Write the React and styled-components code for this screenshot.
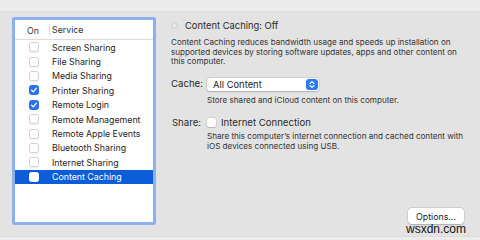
import React from 'react';
import styled, { createGlobalStyle } from 'styled-components';

const GlobalStyle = createGlobalStyle`
  html, body {
    margin: 0;
    padding: 0;
    background: #e3e3e3;
  }
  body {
    font-family: Inter, "Liberation Sans", sans-serif;
    color: #262626;
    -webkit-font-smoothing: antialiased;
  }
`

const Window = styled.section`
  position: relative;
  width: 480px;
  height: 240px;
  display: flex;
  flex-direction: column;
  overflow: hidden;
  background: #e3e3e3;
`

const TopStrip = styled.div`
  height: 12px;
  background: #ececec;
  border-bottom: 1px solid #dedede;
  box-sizing: border-box;
`

const BottomStrip = styled.div`
  height: 4px;
  background: #ececec;
  border-top: 1px solid #dcdcdc;
  box-sizing: border-box;
`

const Main = styled.div`
  flex: 1;
  display: flex;
  min-height: 0;
`

const ListBox = styled.div`
  margin: 5px 0 0 12px;
  width: 144px;
  height: 208px;
  box-sizing: border-box;
  border: 3px solid #8db1ee;
  border-radius: 2px;
  background: #fff;
  display: flex;
  flex-direction: column;
`

const Header = styled.div`
  height: 19px;
  display: flex;
  align-items: center;
  border-bottom: 1px solid #dcdcdc;
  font-size: 8.8px;
  color: #333;
`

const HeadOn = styled.div`
  width: 35px;
  box-sizing: border-box;
  padding-left: 12px;
  align-self: stretch;
  display: flex;
  align-items: center;
  border-right: 1px solid #dedede;
  margin: 4px 0 3px;
`

const HeadService = styled.div`
  padding-left: 2px;
`

const Row = styled.div`
  height: 14.4px;
  display: flex;
  align-items: center;
  font-size: 8.8px;
  background: ${p => (p.$selected ? '#0b5ed8' : 'transparent')};
  color: ${p => (p.$selected ? '#fff' : '#262626')};
`

const CheckCell = styled.div`
  width: 35px;
  display: flex;
  align-items: center;
  padding-left: 14px;
  box-sizing: border-box;
`

const Label = styled.div`
  padding-left: 2px;
  white-space: nowrap;
`

const Check = styled.span`
  width: 10px;
  height: 10px;
  box-sizing: border-box;
  border-radius: 2.5px;
  display: inline-flex;
  align-items: center;
  justify-content: center;
  background: ${p => (p.$on ? '#2a72ec' : '#fff')};
  border: 1px solid ${p => (p.$on ? '#2a72ec' : p.$bright ? '#fff' : '#d2d2d2')};
  box-shadow: ${p => (p.$on ? 'none' : '0 0.5px 1px rgba(0,0,0,0.06)')};
`

const Panel = styled.div`
  flex: 1;
  display: flex;
  flex-direction: column;
  padding: 7px 16px 12px 15px;
  min-width: 0;
`

const TitleRow = styled.div`
  display: flex;
  align-items: center;
  height: 12px;
  gap: 7px;
  font-size: 9.4px;
  color: #2a2a2a;
`

const Radio = styled.span`
  width: 7px;
  height: 7px;
  border-radius: 50%;
  border: 1px solid #cdcdcd;
  background: #e6e6e6;
  box-sizing: border-box;
`

const Desc = styled.p`
  margin: ${p => p.$mt || '0'} 0 0 ${p => p.$indent || '0'};
  font-size: 8.1px;
  line-height: ${p => p.$lh || '9.5px'};
  color: #333;
  white-space: nowrap;
`

const FormGrid = styled.div`
  margin-top: ${p => p.$mt || '11px'};
  display: grid;
  grid-template-columns: 30px auto;
  column-gap: 6px;
  align-items: center;
`

const FieldLabel = styled.div`
  text-align: right;
  font-size: 9.6px;
  color: #2a2a2a;
  line-height: 12px;
`

const Popup = styled.div`
  width: 112px;
  height: 13px;
  box-sizing: border-box;
  background: #fff;
  border-radius: 3px;
  box-shadow: 0 0 0 0.5px rgba(0,0,0,0.12), 0 0.5px 1.5px rgba(0,0,0,0.18);
  display: flex;
  align-items: center;
  justify-content: space-between;
  padding: 0 1px 0 6px;
  font-size: 9.4px;
  color: #222;
`

const Stepper = styled.span`
  width: 12px;
  height: 11px;
  border-radius: 3px;
  background: #2c7bf0;
  display: flex;
  align-items: center;
  justify-content: center;
`

const ShareCheck = styled.span`
  width: 9px;
  height: 9px;
  box-sizing: border-box;
  border-radius: 2px;
  background: #fff;
  box-shadow: 0 0 0 0.5px rgba(0,0,0,0.12), 0 0.5px 1px rgba(0,0,0,0.15);
`

const ShareLine = styled.div`
  display: flex;
  align-items: center;
  gap: 5px;
  font-size: 9.6px;
  line-height: 12px;
  color: #2a2a2a;
`

const Footer = styled.div`
  margin-top: auto;
  display: flex;
  justify-content: flex-end;
`

const Button = styled.button`
  width: 56px;
  height: 16px;
  border: none;
  border-radius: 4px;
  background: #fff;
  box-shadow: 0 0 0 0.5px rgba(0,0,0,0.12), 0 0.5px 1.5px rgba(0,0,0,0.2);
  font-family: inherit;
  font-size: 8.8px;
  color: #222;
  padding: 0;
`

const Watermark = styled.div`
  position: absolute;
  left: 406px;
  top: 222px;
  font-family: "Liberation Sans", Arial, sans-serif;
  font-size: 12px;
  line-height: 14px;
  color: #111;
`

const services = [
  { name: 'Screen Sharing', on: false },
  { name: 'File Sharing', on: false },
  { name: 'Media Sharing', on: false },
  { name: 'Printer Sharing', on: true },
  { name: 'Remote Login', on: true },
  { name: 'Remote Management', on: false },
  { name: 'Remote Apple Events', on: false },
  { name: 'Bluetooth Sharing', on: false },
  { name: 'Internet Sharing', on: false },
  { name: 'Content Caching', on: false, selected: true }
]

const Tick = () => (
  <svg width="8" height="8" viewBox="0 0 8 8">
    <path d="M1.6 4.2 L3.3 5.9 L6.4 2.2" fill="none" stroke="#fff" strokeWidth="1.3" strokeLinecap="round" strokeLinejoin="round" />
  </svg>
)

const Chevrons = () => (
  <svg width="8" height="9" viewBox="0 0 8 9">
    <path d="M2 3.5 L4 1.6 L6 3.5 M2 5.5 L4 7.4 L6 5.5" fill="none" stroke="#fff" strokeWidth="1.1" strokeLinecap="round" strokeLinejoin="round" />
  </svg>
)

export default function App() {
  return (
    <Window>
      <GlobalStyle />
      <TopStrip />
      <Main>
        <ListBox>
          <Header>
            <HeadOn>On</HeadOn>
            <HeadService>Service</HeadService>
          </Header>
          {services.map(s => (
            <Row key={s.name} $selected={s.selected}>
              <CheckCell>
                <Check $on={s.on} $bright={s.selected}>{s.on && <Tick />}</Check>
              </CheckCell>
              <Label>{s.name}</Label>
            </Row>
          ))}
        </ListBox>
        <Panel>
          <TitleRow>
            <Radio />
            <span>Content Caching: Off</span>
          </TitleRow>
          <Desc $mt="7px">
            Content Caching reduces bandwidth usage and speeds up installation on<br />
            supported devices by storing software updates, apps and other content on<br />
            this computer.
          </Desc>
          <FormGrid>
            <FieldLabel>Cache:</FieldLabel>
            <Popup>
              <span>All Content</span>
              <Stepper><Chevrons /></Stepper>
            </Popup>
          </FormGrid>
          <Desc $mt="4px" $indent="36px" $lh="10px">Store shared and iCloud content on this computer.</Desc>
          <FormGrid $mt="12px">
            <FieldLabel>Share:</FieldLabel>
            <ShareLine>
              <ShareCheck />
              <span>Internet Connection</span>
            </ShareLine>
          </FormGrid>
          <Desc $mt="2px" $indent="36px" $lh="10.6px">
            Share this computer’s internet connection and cached content with<br />
            iOS devices connected using USB.
          </Desc>
          <Footer>
            <Button>Options...</Button>
          </Footer>
        </Panel>
      </Main>
      <BottomStrip />
      <Watermark>wsxdn.com</Watermark>
    </Window>
  )
}
